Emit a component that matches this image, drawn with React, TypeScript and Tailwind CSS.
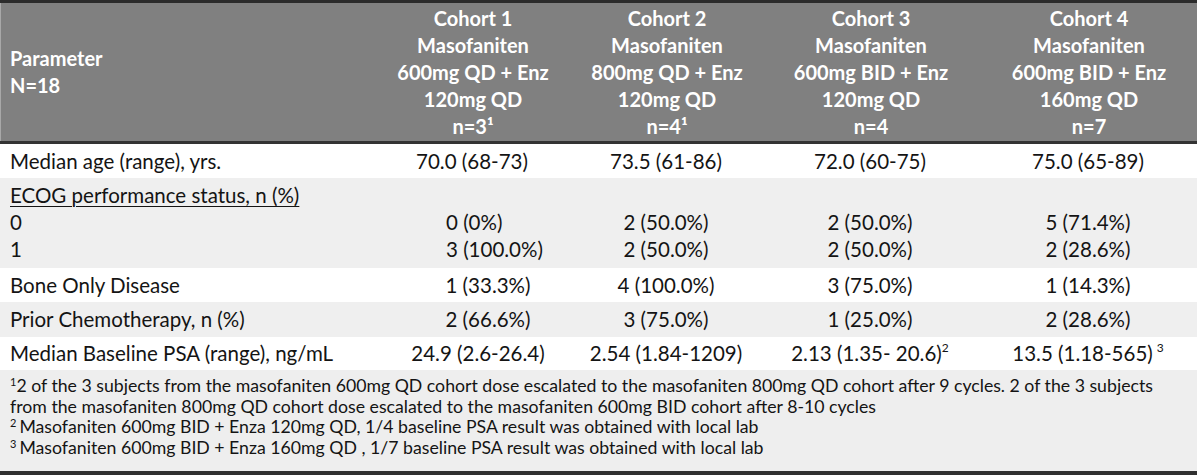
import React from "react";

const cohorts = [
  ["Cohort 1", "Masofaniten", "600mg QD + Enz", "120mg QD", "n=3¹"],
  ["Cohort 2", "Masofaniten", "800mg QD + Enz", "120mg QD", "n=4¹"],
  ["Cohort 3", "Masofaniten", "600mg BID + Enz", "120mg QD", "n=4"],
  ["Cohort 4", "Masofaniten", "600mg BID + Enz", "160mg QD", "n=7"],
];

const grid = "grid grid-cols-[372px_200px_188px_220px_216px]";

function Cell({ children, className = "" }: { children: React.ReactNode; className?: string }) {
  return <div className={"flex items-center justify-center whitespace-nowrap " + className}>{children}</div>;
}

function Sup({ children, className = "" }: { children: React.ReactNode; className?: string }) {
  return <span className={"text-[11px] leading-none align-[6px] " + className}>{children}</span>;
}

export default function App() {
  return (
    <div className="w-[1200px] h-[475px] bg-white overflow-hidden font-['Lato','Open_Sans',sans-serif] text-[#141414]">
      <div className="w-[1197px]">
        <div className="h-[3px] bg-[#2b2b2b]" />
        <div className={grid + " bg-[#808080] text-white font-bold text-[20px] leading-[27px] h-[138px] border-l border-[#a8a8a8]"}>
          <div className="flex flex-col justify-center pl-[9px]">
            <div>Parameter</div>
            <div>N=18</div>
          </div>
          {cohorts.map((c, i) => (
            <div key={i} className="flex flex-col items-center justify-center whitespace-nowrap">
              {c.map((l, j) => (
                <div key={j}>{l}</div>
              ))}
            </div>
          ))}
        </div>
        <div className="h-[3px] bg-[#333333]" />

        <div className="text-[20.5px] leading-[27px]">
          <div className={grid + " h-[34px] bg-white"}>
            <div className="flex items-center pl-[10px]">Median age (range), yrs.</div>
            <Cell>70.0 (68-73)</Cell>
            <Cell>73.5 (61-86)</Cell>
            <Cell>72.0 (60-75)</Cell>
            <Cell>75.0 (65-89)</Cell>
          </div>

          <div className={grid + " h-[90px] bg-[#efefef] pt-[4px]"}>
            <div className="flex flex-col pl-[10px]">
              <div className="underline underline-offset-[3px] decoration-1">ECOG performance status, n (%)</div>
              <div>0</div>
              <div>1</div>
            </div>
            <div className="flex flex-col pl-[74px] pt-[27px]">
              <div>0 (0%)</div>
              <div>3 (100.0%)</div>
            </div>
            <div className="flex flex-col items-center pt-[27px]">
              <div>2 (50.0%)</div>
              <div>2 (50.0%)</div>
            </div>
            <div className="flex flex-col items-center pt-[27px]">
              <div>2 (50.0%)</div>
              <div>2 (50.0%)</div>
            </div>
            <div className="flex flex-col items-center pt-[27px]">
              <div>5 (71.4%)</div>
              <div>2 (28.6%)</div>
            </div>
          </div>

          <div className={grid + " h-[34px] bg-white"}>
            <div className="flex items-center pl-[10px]">Bone Only Disease</div>
            <Cell className="pl-[32px]">1 (33.3%)</Cell>
            <Cell>4 (100.0%)</Cell>
            <Cell>3 (75.0%)</Cell>
            <Cell>1 (14.3%)</Cell>
          </div>

          <div className={grid + " h-[35px] bg-[#efefef]"}>
            <div className="flex items-center pl-[10px]">Prior Chemotherapy, n (%)</div>
            <Cell className="pl-[32px]">2 (66.6%)</Cell>
            <Cell>3 (75.0%)</Cell>
            <Cell>1 (25.0%)</Cell>
            <Cell>2 (28.6%)</Cell>
          </div>

          <div className={grid + " h-[33px] bg-white"}>
            <div className="flex items-center pl-[10px]">Median Baseline PSA (range), ng/mL</div>
            <Cell className="pl-[12px]">24.9 (2.6-26.4)</Cell>
            <Cell>2.54 (1.84-1209)</Cell>
            <Cell>
              2.13 (1.35- 20.6)<span className="text-[12px] leading-none self-start mt-[5px]">2</span>
            </Cell>
            <Cell>
              13.5 (1.18-565)<span className="text-[12px] leading-none self-start mt-[5px] ml-[4px]">3</span>
            </Cell>
          </div>
        </div>

        <div className="h-[101px] bg-[#eeeeee] px-[10px] pt-[6px] text-[17.7px] leading-[20.5px]">
          <div>
            <Sup>1</Sup>2 of the 3 subjects from the masofaniten 600mg QD cohort dose escalated to the masofaniten 800mg QD cohort after 9 cycles. 2 of the 3 subjects
            <br />
            from the masofaniten 800mg QD cohort dose escalated to the masofaniten 600mg BID cohort after 8-10 cycles
          </div>
          <div>
            <Sup className="mr-[3px]">2</Sup>Masofaniten 600mg BID + Enza 120mg QD, 1/4 baseline PSA result was obtained with local lab
          </div>
          <div>
            <Sup className="mr-[3px]">3</Sup>Masofaniten 600mg BID + Enza 160mg QD , 1/7 baseline PSA result was obtained with local lab
          </div>
        </div>
        <div className="h-[4px] bg-[#303030]" />
      </div>
    </div>
  );
}
